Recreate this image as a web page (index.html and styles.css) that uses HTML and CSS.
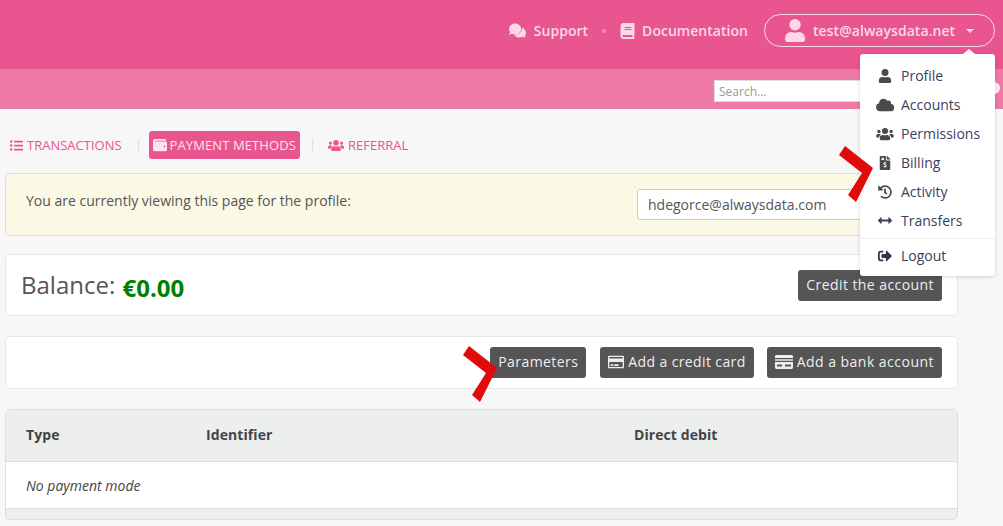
FILE: index.html
```html
<!DOCTYPE html>
<html lang="en">
<head>
<meta charset="utf-8">
<title>Payment methods</title>
<link rel="stylesheet" href="styles.css">
</head>
<body>
<svg class="sprite" width="0" height="0">
    <symbol id="i-user" viewBox="0 0 448 512"><path d="M224 256a128 128 0 1 0 0-256 128 128 0 0 0 0 256zm90 32h-17a174 174 0 0 1-146 0h-17A134 134 0 0 0 0 422v42a48 48 0 0 0 48 48h352a48 48 0 0 0 48-48v-42a134 134 0 0 0-134-134z"/></symbol>
    <symbol id="i-users" viewBox="0 0 640 512"><path d="M96 224a64 64 0 1 0 0-128 64 64 0 0 0 0 128zm448 0a64 64 0 1 0 0-128 64 64 0 0 0 0 128zm32 32h-64c-18 0-34 7-45 19a146 146 0 0 1 75 109h66c18 0 32-14 32-32v-32c0-35-29-64-64-64zm-256 0a112 112 0 1 0 0-224 112 112 0 0 0 0 224zm77 32h-8a157 157 0 0 1-138 0h-8A115 115 0 0 0 128 403v29c0 26 22 48 48 48h288c26 0 48-22 48-48v-29c0-64-52-115-115-115zM173 275c-11-12-27-19-45-19H64c-35 0-64 29-64 64v32c0 18 14 32 32 32h66a147 147 0 0 1 75-109z"/></symbol>
    <symbol id="i-cloud" viewBox="0 0 640 512"><path d="M537 222a96 96 0 0 0-89-130c-17 0-33 4-47 13a160 160 0 0 0-297 83v8A144 144 0 0 0 144 480h368a128 128 0 0 0 25-258z"/></symbol>
    <symbol id="i-bill" viewBox="0 0 384 512"><path d="M377 105 279 7c-5-4-11-7-17-7h-6v128h128v-6c0-6-3-12-7-17zM224 136V0H24C11 0 0 11 0 24v464c0 13 11 24 24 24h336c13 0 24-11 24-24V160H248c-13 0-24-11-24-24zM64 72c0-4 4-8 8-8h80c4 0 8 4 8 8v16c0 4-4 8-8 8H72c-4 0-8-4-8-8zm0 64v-16c0-4 4-8 8-8h80c4 0 8 4 8 8v16c0 4-4 8-8 8H72c-4 0-8-4-8-8zm144 264v24c0 4-4 8-8 8h-16c-4 0-8-4-8-8v-24c-11-1-22-5-32-11-4-2-4-8 0-11l12-11c3-3 7-3 10-1 4 2 8 3 12 3h28c6 0 11-6 11-13 0-6-3-11-8-12l-45-13c-18-6-31-24-31-44 0-24 19-44 42-45v-24c0-4 4-8 8-8h16c4 0 8 4 8 8v24c11 1 22 5 32 11 4 2 4 8 0 11l-12 11c-3 3-7 3-10 1-4-2-8-3-12-3h-28c-6 0-11 6-11 13 0 6 3 11 8 12l45 13c18 6 31 24 31 44 0 24-19 44-42 45z"/></symbol>
    <symbol id="i-history" viewBox="0 0 512 512"><path d="M504 255c0 137-111 249-248 249-58 0-111-20-153-53-12-9-13-27-2-38l11-11c9-9 23-10 33-2a184 184 0 1 0-12-273l51 51c10 10 3 27-11 27H24c-9 0-16-7-16-16V40c0-14 17-21 27-11l50 50A247 247 0 0 1 256 8c137 0 248 110 248 247zM323 334l10-13c8-10 6-25-4-33l-41-32V152c0-13-11-24-24-24h-16c-13 0-24 11-24 24v136l65 50c11 8 26 6 34-4z"/></symbol>
    <symbol id="i-arrows" viewBox="0 0 512 512"><path d="M378 161c-8-8-20-2-20 8v55H154v-55c0-10-12-16-20-8L44 248c-5 5-5 11 0 16l90 87c8 8 20 2 20-8v-55h204v55c0 10 12 16 20 8l90-87c5-5 5-11 0-16z"/></symbol>
    <symbol id="i-logout" viewBox="0 0 512 512"><path d="M497 273 329 441c-15 15-41 4-41-17v-96H152c-13 0-24-11-24-24v-96c0-13 11-24 24-24h136V88c0-21 26-32 41-17l168 168c9 10 9 24 0 34zM192 436v-40c0-7-5-12-12-12H96c-18 0-32-14-32-32V160c0-18 14-32 32-32h84c7 0 12-5 12-12V76c0-7-5-12-12-12H96C43 64 0 107 0 160v192c0 53 43 96 96 96h84c7 0 12-5 12-12z"/></symbol>
    <symbol id="i-comments" viewBox="0 0 576 512"><path d="M416 192C416 86 323 0 208 0S0 86 0 192c0 41 14 79 38 110-13 30-35 54-35 54-3 3-4 8-2 12s5 6 9 6c37 0 68-12 90-26a230 230 0 0 0 108 26c115 0 208-86 208-192zm122 238c24-31 38-69 38-110 0-80-54-149-130-178 1 6 2 12 2 18 0 125-122 224-256 224h-16c32 57 99 96 176 96 39 0 76-10 108-26 22 14 53 26 90 26 4 0 7-2 9-6s1-9-2-12c0 0-22-24-35-54z"/></symbol>
    <symbol id="i-book" viewBox="0 0 448 512"><path d="M448 360V24c0-13-11-24-24-24H96C43 0 0 43 0 96v320c0 53 43 96 96 96h328c13 0 24-11 24-24v-16c0-8-4-14-9-19-4-15-4-59 0-73 5-5 9-12 9-20zM128 134c0-3 3-6 6-6h212c3 0 6 3 6 6v20c0 3-3 6-6 6H134c-3 0-6-3-6-6zm0 64c0-3 3-6 6-6h212c3 0 6 3 6 6v20c0 3-3 6-6 6H134c-3 0-6-3-6-6zm253 250H96a32 32 0 0 1 0-64h285c-2 17-2 47 0 64z"/></symbol>
    <symbol id="i-list" viewBox="0 0 512 512"><path d="M48 48a48 48 0 1 0 0 96 48 48 0 0 0 0-96zm0 160a48 48 0 1 0 0 96 48 48 0 0 0 0-96zm0 160a48 48 0 1 0 0 96 48 48 0 0 0 0-96zm448 16H176c-9 0-16 7-16 16v40c0 9 7 16 16 16h320c9 0 16-7 16-16v-40c0-9-7-16-16-16zm0-320H176c-9 0-16 7-16 16v40c0 9 7 16 16 16h320c9 0 16-7 16-16V80c0-9-7-16-16-16zm0 160H176c-9 0-16 7-16 16v40c0 9 7 16 16 16h320c9 0 16-7 16-16v-40c0-9-7-16-16-16z"/></symbol>
    <symbol id="i-wallet" viewBox="0 0 512 512"><path d="M461 128H80c-9 0-16-7-16-16s7-16 16-16h384c9 0 16-7 16-16 0-27-21-48-48-48H64C29 32 0 61 0 96v320c0 35 29 64 64 64h397c28 0 51-22 51-48V176c0-26-23-48-51-48zm-45 208a32 32 0 1 1 0-64 32 32 0 0 1 0 64z"/></symbol>
    <symbol id="i-card" viewBox="0 0 576 512"><path d="M528 32H48C21 32 0 53 0 80v352c0 27 21 48 48 48h480c27 0 48-21 48-48V80c0-27-21-48-48-48zM54 80h468c3 0 6 3 6 6v42H48V86c0-3 3-6 6-6zm468 352H54c-3 0-6-3-6-6V256h480v170c0 3-3 6-6 6zM192 348v40c0 7-5 12-12 12h-72c-7 0-12-5-12-12v-40c0-7 5-12 12-12h72c7 0 12 5 12 12zm192 0v40c0 7-5 12-12 12H236c-7 0-12-5-12-12v-40c0-7 5-12 12-12h136c7 0 12 5 12 12z"/></symbol>
    <symbol id="i-bank" viewBox="0 0 576 512"><path d="M0 432c0 27 21 48 48 48h480c27 0 48-21 48-48V256H0zm64-84c0-7 5-12 12-12h136c7 0 12 5 12 12v40c0 7-5 12-12 12H76c-7 0-12-5-12-12zm256 0c0-7 5-12 12-12h168c7 0 12 5 12 12v40c0 7-5 12-12 12H332c-7 0-12-5-12-12zM576 80v48H0V80c0-27 21-48 48-48h480c27 0 48 21 48 48zM0 168h576v48H0z"/></symbol>
    <symbol id="i-mark" viewBox="0 0 34 56"><path d="M6 0 34 22 17 56 9 49 23 27 0 9z"/></symbol>
</svg>

<header class="topbar">
    <a class="toplink"><svg class="ico ico-w"><use href="#i-comments"/></svg>Support</a>
    <span class="topdot"></span>
    <a class="toplink"><svg class="ico"><use href="#i-book"/></svg>Documentation</a>
    <a class="account">
        <svg class="account-ico"><use href="#i-user"/></svg>
        <span>test@alwaysdata.net</span>
        <span class="caret"></span>
    </a>
</header>
<div class="subbar">
    <input class="search" type="text" placeholder="Search...">
    <span class="search-btn"></span>
</div>

<main class="content">
    <nav class="tabs">
        <a class="tab"><svg class="tab-ico"><use href="#i-list"/></svg>TRANSACTIONS</a>
        <span class="tab-sep"></span>
        <a class="tab tab-active"><svg class="tab-ico"><use href="#i-wallet"/></svg>PAYMENT METHODS</a>
        <span class="tab-sep"></span>
        <a class="tab"><svg class="tab-ico tab-ico-wide"><use href="#i-users"/></svg>REFERRAL</a>
    </nav>

    <section class="notice">
        <p>You are currently viewing this page for the profile:</p>
        <div class="profile-select">hdegorce@alwaysdata.com</div>
    </section>

    <section class="card balance">
        <h2>Balance: <strong>€0.00</strong></h2>
        <a class="btn">Credit the account</a>
    </section>

    <section class="card actions">
        <a class="btn">Parameters</a>
        <a class="btn btn-credit"><svg class="btn-ico"><use href="#i-card"/></svg>Add a credit card</a>
        <a class="btn btn-bank"><svg class="btn-ico btn-ico-wide"><use href="#i-bank"/></svg>Add a bank account</a>
    </section>

    <section class="table">
        <div class="table-head">
            <span class="col-type">Type</span>
            <span class="col-id">Identifier</span>
            <span>Direct debit</span>
        </div>
        <div class="table-row">No payment mode</div>
        <div class="table-foot"></div>
    </section>
</main>

<ul class="menu">
    <li><svg class="menu-ico"><use href="#i-user"/></svg>Profile</li>
    <li><svg class="menu-ico"><use href="#i-cloud"/></svg>Accounts</li>
    <li><svg class="menu-ico"><use href="#i-users"/></svg>Permissions</li>
    <li><svg class="menu-ico"><use href="#i-bill"/></svg>Billing</li>
    <li><svg class="menu-ico"><use href="#i-history"/></svg>Activity</li>
    <li><svg class="menu-ico menu-ico-arrows"><use href="#i-arrows"/></svg>Transfers</li>
    <li class="menu-last"><svg class="menu-ico menu-ico-logout"><use href="#i-logout"/></svg>Logout</li>
</ul>

<svg class="mark mark-billing"><use href="#i-mark"/></svg>
<svg class="mark mark-params"><use href="#i-mark"/></svg>
</body>
</html>
```

FILE: styles.css
```css
* {
    margin: 0;
    padding: 0;
    box-sizing: border-box;
}

html, body {
    height: 526px;
    overflow: hidden;
}

body {
    position: relative;
    background-color: #f7f7f7;
    font-family: "Open Sans", sans-serif;
    font-size: 14px;
    color: #555;
}

.sprite {
    position: absolute;
}

svg {
    fill: currentColor;
}

/* top bars */
.topbar {
    height: 69px;
    background-color: #e9558f;
    display: flex;
    align-items: center;
    justify-content: flex-end;
    padding: 0 8px 8px 0;
    color: #fbd9e6;
    font-size: 14px;
    font-weight: 600;
}

.toplink {
    display: flex;
    align-items: center;
    letter-spacing: .03px;
}

.ico {
    width: 15px;
    height: 16px;
    margin-right: 7px;
}

.ico-w {
    width: 17px;
    margin-right: 8px;
}

.topdot {
    width: 4px;
    height: 4px;
    border-radius: 50%;
    background-color: #f093b6;
    margin: 0 14px;
}

.account {
    display: flex;
    align-items: center;
    width: 231px;
    height: 33px;
    margin-left: 16px;
    padding-left: 20px;
    border: 1px solid #fbd9e6;
    border-radius: 17px;
    letter-spacing: .05px;
}

.account-ico {
    width: 20px;
    height: 23px;
    margin-right: 8px;
}

.caret {
    margin-left: 11px;
    border-top: 4px solid #fbd9e6;
    border-left: 4px solid transparent;
    border-right: 4px solid transparent;
}

.subbar {
    display: flex;
    gap: 4px;
    height: 40px;
    background-color: #ee78a6;
    padding-top: 11px;
    padding-left: 714px;
}

.search {
    display: block;
    width: 270px;
    height: 22px;
    border: 1px solid #ddd;
    background-color: #fff;
    padding: 0 4px;
    font-family: "Open Sans", sans-serif;
    font-size: 12px;
}

.search::placeholder {
    color: #999;
}

.search-btn {
    width: 12px;
    height: 12px;
    margin-top: 2px;
    border-radius: 50%;
    background-color: #fbeef3;
}

/* content */
.content {
    padding: 22px 45px 0 5px;
}

.tabs {
    display: flex;
    align-items: center;
    height: 28px;
    font-size: 13px;
    color: #e9558f;
}

.tab {
    display: flex;
    align-items: center;
    height: 28px;
    padding: 0 4px 0 5px;
    border-radius: 3px;
}

.tab-active {
    background-color: #e9558f;
    color: #fbe3ec;
    padding-left: 4px;
    letter-spacing: .1px;
}

.tab-ico {
    width: 13px;
    height: 13px;
    margin-right: 4px;
}

.tab-active .tab-ico {
    width: 14px;
    height: 14px;
    margin-right: 3px;
}

.tab-ico-wide {
    width: 16px;
    margin-right: 4px;
}

.tab-sep {
    width: 1px;
    height: 13px;
    background-color: #dde1e6;
    margin: 0 10px 0 12px;
}

.notice {
    display: flex;
    justify-content: space-between;
    height: 63px;
    margin-top: 14px;
    padding: 15px 15px 0 20px;
    background-color: #fbf8e6;
    border: 1px solid #ddd;
    border-radius: 5px;
}

.notice p {
    padding-top: 2px;
}

.profile-select {
    width: 305px;
    height: 31px;
    background-color: #fff;
    border: 1px solid #ccc;
    border-radius: 3px;
    padding: 5px 10px;
}

.card {
    display: flex;
    background-color: #fff;
    border: 1px solid #e6e6e6;
    border-radius: 5px;
}

.balance {
    justify-content: space-between;
    align-items: center;
    height: 62px;
    margin-top: 18px;
    padding: 0 15px;
}

.balance h2 {
    padding-top: 2px;
    font-size: 24px;
    font-weight: 400;
}

.balance strong {
    color: #008000;
    font-weight: 700;
    margin-left: 1px;
    vertical-align: -3px;
}

.balance .btn {
    padding-bottom: 2px;
}

.actions {
    justify-content: flex-end;
    gap: 14px;
    height: 53px;
    margin-top: 20px;
    padding: 10px 15px 0;
}

.actions .btn {
    padding-bottom: 2px;
}

.actions .btn-credit {
    letter-spacing: .38px;
}

.actions .btn-bank {
    margin-left: -1px;
    letter-spacing: .48px;
}

.btn {
    display: flex;
    align-items: center;
    height: 31px;
    padding: 0 8px;
    background-color: #555;
    color: #eee;
    border-radius: 3px;
    letter-spacing: .43px;
}

.btn-ico {
    width: 16px;
    height: 16px;
    margin-right: 4px;
}

.btn-ico-wide {
    width: 18px;
}

.table {
    height: 111px;
    margin-top: 20px;
    border: 1px solid #ddd;
    border-radius: 5px;
    background-color: #eee;
    overflow: hidden;
}

.table-head {
    display: flex;
    align-items: center;
    height: 52px;
    padding: 0 0 2px 20px;
    background-color: #edeeee;
    border-bottom: 1px solid #ddd;
    font-weight: 700;
    color: #444;
    letter-spacing: .08px;
}

.col-type {
    width: 180px;
}

.col-id {
    width: 428px;
}

.table-row {
    display: flex;
    align-items: center;
    height: 47px;
    padding-left: 20px;
    background-color: #fff;
    border-bottom: 1px solid #ddd;
    font-style: italic;
    color: #444;
}

/* things lying over the page */
.menu {
    position: absolute;
    top: 54px;
    left: 860px;
    width: 135px;
    height: 222px;
    padding: 7px 0;
    list-style: none;
    background-color: #fff;
    border-radius: 3px;
    box-shadow: 0 1px 4px rgba(0, 0, 0, .15);
    color: #3c4060;
}

.menu::before {
    content: "";
    position: absolute;
    top: -5px;
    right: 20px;
    border-bottom: 5px solid #fff;
    border-left: 6px solid transparent;
    border-right: 6px solid transparent;
}

.menu li {
    display: flex;
    align-items: center;
    height: 29px;
    padding-left: 15px;
}

.menu-ico {
    flex-shrink: 0;
    width: 20px;
    height: 14px;
    margin-right: 6px;
    color: #4a4a4a;
}

.menu-ico-arrows {
    height: 17px;
    color: #3c4060;
}

.menu-ico-logout {
    color: #2f3350;
}

.menu .menu-last {
    height: 34px;
    margin-top: 3px;
    border-top: 1px solid #eee;
}

.mark {
    position: absolute;
    width: 34px;
    height: 56px;
    color: #e00b0b;
}

.mark-billing {
    left: 839px;
    top: 146px;
}

.mark-params {
    left: 463px;
    top: 346px;
}
```
